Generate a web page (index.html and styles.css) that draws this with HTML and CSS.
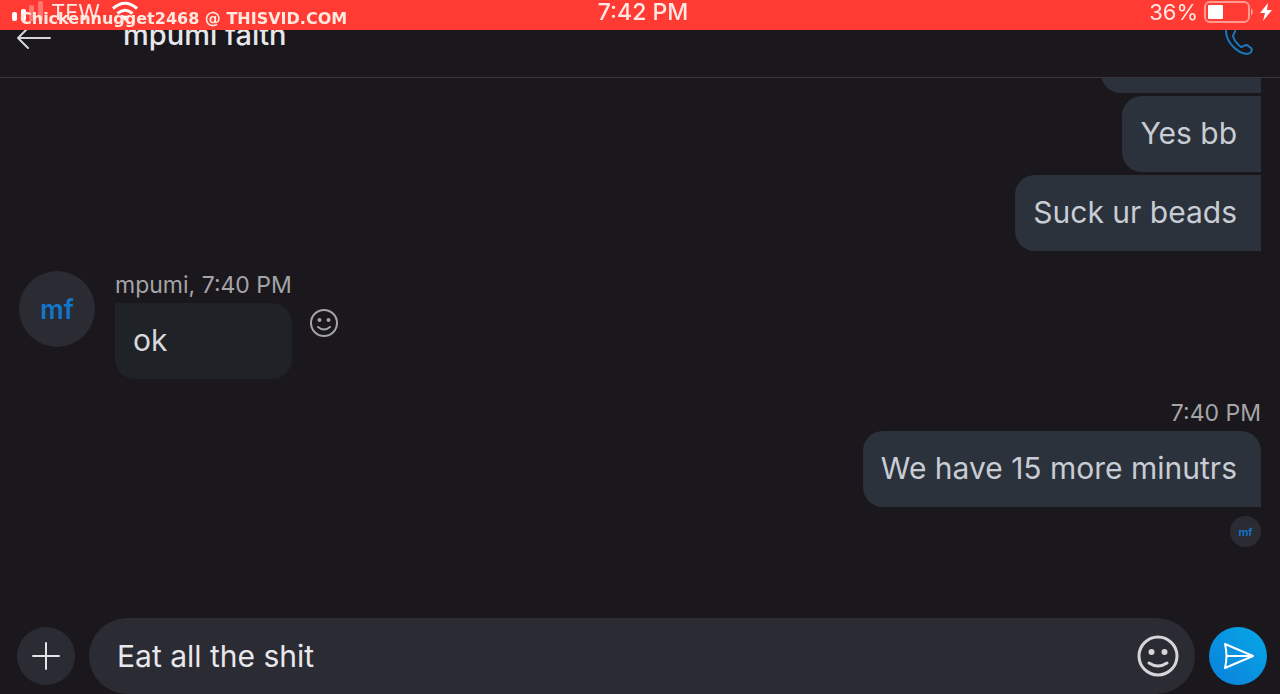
FILE: index.html
```html
<!DOCTYPE html>
<html lang="en">
<head>
<meta charset="utf-8">
<meta name="viewport" content="width=device-width, initial-scale=1">
<title>mpumi faith</title>
<link rel="stylesheet" href="styles.css">
</head>
<body>
<div class="status">
  <div class="status-left">
    <svg class="signal" width="34" height="24" viewBox="0 0 34 24" fill="#fff" aria-hidden="true"><rect x="1" y="12" width="5" height="9" rx="2"/><rect x="10" y="9" width="5" height="12" rx="2"/><rect x="18" y="5" width="5" height="16" rx="2" opacity=".3"/><rect x="27" y="1" width="5" height="20" rx="2" opacity=".3"/></svg>
    <span class="carrier">TFW</span>
    <svg class="wifi" width="28" height="22" viewBox="0 0 28 22" fill="none" stroke="#fff" stroke-width="3" aria-hidden="true"><path d="M2 7.500Q14-3 26 7.500M6.500 12.500Q14 6 21.500 12.500"/><path d="M10 16Q14 13 18 16L14 20Z" fill="#fff" stroke="none"/></svg>
  </div>
  <time class="clock">7:42 PM</time>
  <div class="status-right">
    <span class="percent">36%</span>
    <svg width="50" height="22" viewBox="0 0 50 22" aria-hidden="true"><rect x="1" y="1" width="44" height="20" rx="5" fill="none" stroke="#ff9b91" stroke-width="2"/><rect x="4" y="4" width="15" height="14" rx="1" fill="#fff"/><path d="M47 7Q51 11 47 15Z" fill="#ff9b91"/></svg>
    <svg width="12" height="20" viewBox="0 0 12 20" aria-hidden="true"><path d="M8 1L0 11H5L3 19L12 8H7Z" fill="#fff"/></svg>
  </div>
  <span class="watermark">Chickennugget2468 @ THISVID.COM</span>
</div>
<header class="header">
  <button class="plain" aria-label="Back"><svg width="36" height="24" viewBox="0 0 36 24" fill="none" stroke="#d6d6da" stroke-width="2" stroke-linecap="round" stroke-linejoin="round"><path d="M34 11H2M12 1L2 11L12 21"/></svg></button>
  <h1 class="title">mpumi faith</h1>
  <button class="plain call" aria-label="Call"><svg width="30" height="32" viewBox="0 0 30 32" fill="none" stroke="#1c75bd" stroke-width="2" stroke-linejoin="round"><path d="M2 8C2 4 4 1 7 1L11 7C12 9 9 11 9 13C10 17 13 21 17 24C19 24 20 22 23 22L27 25C29 27 27 31 23 31C13 30 2 19 2 8Z"/></svg></button>
</header>
<main class="chat">
  <div class="sent">
    <div class="bubble mid earlier"></div>
    <div class="bubble mid">Yes bb</div>
    <div class="bubble mid last">Suck ur beads</div>
  </div>
  <div class="received">
    <div class="avatar">mf</div>
    <div class="incoming">
      <div class="meta">mpumi, 7:40 PM</div>
      <div class="bubble in">ok</div>
    </div>
    <button class="plain react" aria-label="React"><svg width="28" height="28" viewBox="0 0 28 28" fill="none" stroke="#a5a4a7" stroke-width="2" stroke-linecap="round"><circle cx="14" cy="14" r="13"/><path d="M8 18Q14 23 20 18"/><g fill="#a5a4a7" stroke="none"><circle cx="9.500" cy="11" r="2"/><circle cx="18.500" cy="11" r="2"/></g></svg></button>
  </div>
  <div class="sent">
    <div class="meta">7:40 PM</div>
    <div class="bubble first">We have 15 more minutrs</div>
    <div class="avatar seen">mf</div>
  </div>
</main>
<form class="composer">
  <button type="button" class="round add" aria-label="Add"><svg width="28" height="28" viewBox="0 0 28 28" stroke="#e4e4e8" stroke-width="2" stroke-linecap="round"><path d="M14 1V27M1 14H27"/></svg></button>
  <div class="field">
    <input class="input" type="text" aria-label="Message" value="Eat all the shit">
    <button type="button" class="plain" aria-label="Emoji"><svg width="42" height="42" viewBox="0 0 42 42" fill="none" stroke="#d6d5da" stroke-width="3" stroke-linecap="round"><circle cx="21" cy="21" r="19"/><path d="M12 28Q21 34 30 28"/><g fill="#d6d5da" stroke="none"><circle cx="14.500" cy="17" r="3"/><circle cx="27.500" cy="17" r="3"/></g></svg></button>
  </div>
  <button type="button" class="round send" aria-label="Send"><svg width="32" height="28" viewBox="0 0 32 28" fill="none" stroke="#fff" stroke-width="2" stroke-linejoin="round"><path d="M2 2L30 14L2 26Q5 14 2 2ZM4 14H30"/></svg></button>
</form>
</body>
</html>
```
FILE: styles.css
```css
* { box-sizing: border-box; }

body {
  margin: 0;
  height: 100vh;
  display: flex;
  flex-direction: column;
  overflow: hidden;
  background: #1a181d;
  color: #c8ccd4;
  font-family: Inter, "Liberation Sans", sans-serif;
}

svg { display: block; flex: none; }

.plain {
  padding: 0;
  border: 0;
  background: none;
}

.status {
  position: fixed;
  inset: 0 0 auto;
  z-index: 2;
  height: 30px;
  padding: 0 8px 6px 11px;
  display: grid;
  grid-template-columns: 1fr auto 1fr;
  align-items: center;
  background: #ff3b33;
  color: #ffe9e5;
  font-size: 22px;
  line-height: 24px;
}

.status-left, .status-right {
  display: flex;
  align-items: center;
}

.status-left { gap: 6px; }
.wifi { margin-left: 5px; }
.status-right { justify-content: flex-end; gap: 6px; }
.clock { padding-left: 3px; font-size: 23px; font-weight: 500; }

.watermark {
  position: absolute;
  left: 20px;
  top: 9px;
  color: #ffe9e0;
  font: bold 16px/20px "DejaVu Sans", sans-serif;
  white-space: nowrap;
}

.header {
  flex: none;
  height: 78px;
  padding: 0 26px 0 16px;
  display: flex;
  align-items: center;
  border-bottom: 1px solid #38363a;
}

.title {
  flex: 1;
  margin: 0;
  padding: 0 0 8px 71px;
  color: #e8e8ec;
  font-size: 29px;
  line-height: 34px;
  font-weight: 500;
}

.chat {
  flex: 1;
  min-height: 0;
  padding: 0 19px 71px;
  display: flex;
  flex-direction: column;
  justify-content: flex-end;
  gap: 20px;
  overflow: hidden;
}

.sent {
  display: flex;
  flex-direction: column;
  align-items: flex-end;
}

.bubble {
  padding: 17px 24px 19px 18px;
  border-radius: 20px;
  background: #2b323b;
  font-size: 30px;
  line-height: 40px;
}

.mid {
  margin-bottom: 3px;
  border-radius: 20px 0 0 20px;
}

.earlier {
  width: 160px;
  height: 76px;
}

.last { margin-bottom: 0; }
.first { border-bottom-right-radius: 0; }

.meta {
  margin-bottom: 4px;
  color: #a5a4a7;
  font-size: 23px;
  line-height: 28px;
}

.received {
  display: flex;
  align-items: flex-start;
}

.avatar {
  width: 76px;
  height: 76px;
  margin-right: 20px;
  display: grid;
  place-items: center;
  border-radius: 50%;
  background: #2b2b34;
  color: #0f78cc;
  font-size: 26px;
  font-weight: 600;
}

.bubble.in {
  border-top-left-radius: 0;
  background: #1f2226;
  color: #d8d8dc;
}

.react { margin: 38px 0 0 18px; }

.seen {
  width: 31px;
  height: 31px;
  margin: 9px 0 0;
  font-size: 11px;
}

.composer {
  flex: none;
  margin: 0;
  padding: 0 13px 0 17px;
  display: flex;
  align-items: center;
  gap: 14px;
}

.round {
  flex: none;
  width: 58px;
  height: 58px;
  padding: 0;
  display: grid;
  place-items: center;
  border: 0;
  border-radius: 50%;
}

.add { background: #2b2b34; }
.send { background: linear-gradient(45deg, #0b7fdc, #06a8e6); padding-left: 2px; }

.field {
  flex: 1;
  min-width: 0;
  height: 76px;
  padding: 0 16px 0 28px;
  display: flex;
  align-items: center;
  border-radius: 38px;
  background: #2b2b34;
}

.input {
  flex: 1;
  min-width: 0;
  padding: 0;
  border: 0;
  outline: 0;
  background: none;
  color: #e8e8ec;
  font: 30px/40px Inter, "Liberation Sans", sans-serif;
}
```
